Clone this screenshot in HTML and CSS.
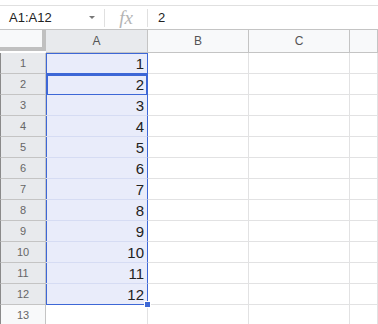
FILE: index.html
```html
<!DOCTYPE html>
<html lang="en">
<head>
  <meta charset="UTF-8">
  <title>Sheet</title>
  <link rel="stylesheet" href="styles.css">
</head>
<body>

  <div class="toolbar-edge"></div>

  <div class="formula-bar">
    <div class="name-box">
      <span>A1:A12</span>
      <span class="caret"></span>
    </div>
    <div class="fx">fx</div>
    <div class="formula">2</div>
  </div>

  <div class="sheet">
    <div class="corner"></div>
    <div class="col-head active">A</div>
    <div class="col-head">B</div>
    <div class="col-head">C</div>
    <div class="col-head"></div>

    <div class="row-head active">1</div><div class="cell sel first">1</div><div class="cell"></div><div class="cell"></div><div class="cell"></div>
    <div class="row-head active">2</div><div class="cell sel current">2</div><div class="cell"></div><div class="cell"></div><div class="cell"></div>
    <div class="row-head active">3</div><div class="cell sel">3</div><div class="cell"></div><div class="cell"></div><div class="cell"></div>
    <div class="row-head active">4</div><div class="cell sel">4</div><div class="cell"></div><div class="cell"></div><div class="cell"></div>
    <div class="row-head active">5</div><div class="cell sel">5</div><div class="cell"></div><div class="cell"></div><div class="cell"></div>
    <div class="row-head active">6</div><div class="cell sel">6</div><div class="cell"></div><div class="cell"></div><div class="cell"></div>
    <div class="row-head active">7</div><div class="cell sel">7</div><div class="cell"></div><div class="cell"></div><div class="cell"></div>
    <div class="row-head active">8</div><div class="cell sel">8</div><div class="cell"></div><div class="cell"></div><div class="cell"></div>
    <div class="row-head active">9</div><div class="cell sel">9</div><div class="cell"></div><div class="cell"></div><div class="cell"></div>
    <div class="row-head active">10</div><div class="cell sel">10</div><div class="cell"></div><div class="cell"></div><div class="cell"></div>
    <div class="row-head active">11</div><div class="cell sel">11</div><div class="cell"></div><div class="cell"></div><div class="cell"></div>
    <div class="row-head active">12</div><div class="cell sel last">12<span class="handle"></span></div><div class="cell"></div><div class="cell"></div><div class="cell"></div>
    <div class="row-head">13</div><div class="cell"></div><div class="cell"></div><div class="cell"></div><div class="cell"></div>
  </div>

</body>
</html>
```

FILE: styles.css
```css
body {
  margin: 0;
  font-family: "Liberation Sans", Arial, sans-serif;
  background-color: white;
  overflow: hidden;
}

.toolbar-edge {
  height: 5px;
  border-bottom: 1px solid #e0e0e0;
}

.formula-bar {
  display: flex;
  align-items: center;
  height: 23px;
  border-bottom: 1px solid #c4c4c4;
  font-size: 13px;
  color: #222;
}

.name-box {
  display: flex;
  align-items: center;
  justify-content: space-between;
  width: 95px;
  height: 18px;
  padding-left: 9px;
  border-right: 1px solid #e0e0e0;
}

.caret {
  width: 0;
  height: 0;
  margin-right: 9px;
  border-left: 3px solid transparent;
  border-right: 3px solid transparent;
  border-top: 3px solid #777;
}

.fx {
  width: 42px;
  height: 18px;
  line-height: 18px;
  text-align: center;
  font-family: "Liberation Serif", "Times New Roman", serif;
  font-style: italic;
  font-size: 19px;
  color: #b4b4b4;
  border-right: 1px solid #e0e0e0;
}

.formula {
  padding-left: 10px;
}

.sheet {
  display: grid;
  grid-template-columns: 46px 102px 101px 101px 1fr;
  grid-template-rows: 23px;
  grid-auto-rows: 21px;
}

.corner {
  background-color: #f8f9fa;
  border-right: 4px solid #c0c0c0;
  border-bottom: 4px solid #c0c0c0;
  margin-bottom: 2px;
  box-sizing: border-box;
}

.col-head {
  display: flex;
  align-items: center;
  justify-content: center;
  background-color: #f8f9fa;
  border-right: 1px solid #c4c4c4;
  border-bottom: 1px solid #c4c4c4;
  font-size: 12px;
  color: #555;
}

.row-head {
  display: flex;
  align-items: center;
  justify-content: center;
  background-color: #f8f9fa;
  border-left: 1px solid #8a8a8a;
  border-right: 1px solid #c4c4c4;
  border-bottom: 1px solid #c4c4c4;
  font-size: 11px;
  color: #666;
}

.col-head.active,
.row-head.active {
  background-color: #e8eaed;
}

.cell {
  position: relative;
  display: flex;
  align-items: center;
  justify-content: flex-end;
  padding-right: 3px;
  border-right: 1px solid #e2e2e3;
  border-bottom: 1px solid #e2e2e3;
  font-size: 15px;
  color: #222;
}

.cell.sel {
  background-color: #e9ecfa;
  box-shadow: inset 1px 0 0 #3d67d6;
  border-right-color: #3d67d6;
  border-bottom-color: #d6dcf3;
}

.cell.first {
  box-shadow: inset 1px 0 0 #3d67d6, inset 0 1px 0 #3d67d6;
}

.cell.last {
  border-bottom-color: #3d67d6;
}

.cell.current {
  border-bottom-color: #3d67d6;
  box-shadow: inset 2px 2px 0 #3d67d6, inset -1px 0 0 #3d67d6, 0 -1px 0 #3d67d6;
}

.handle {
  position: absolute;
  right: -4px;
  bottom: -4px;
  width: 5px;
  height: 5px;
  background-color: #3d67d6;
  border: 1px solid white;
  z-index: 2;
}
```
